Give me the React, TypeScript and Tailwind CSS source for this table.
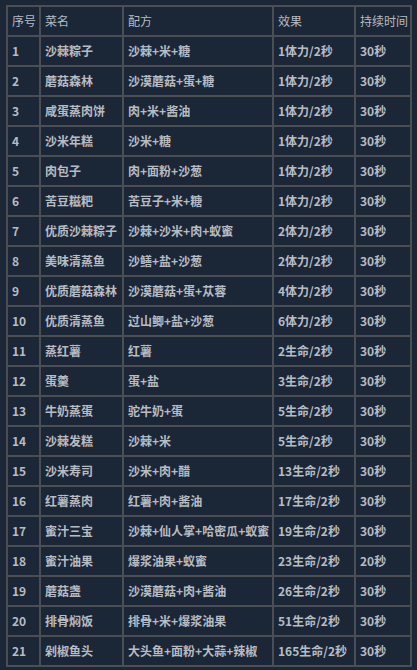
import React from "react";

const rows: [string, string, string, string, string][] = [
  ["1", "沙棘粽子", "沙棘+米+糖", "1体力/2秒", "30秒"],
  ["2", "蘑菇森林", "沙漠蘑菇+蛋+糖", "1体力/2秒", "30秒"],
  ["3", "咸蛋蒸肉饼", "肉+米+酱油", "1体力/2秒", "30秒"],
  ["4", "沙米年糕", "沙米+糖", "1体力/2秒", "30秒"],
  ["5", "肉包子", "肉+面粉+沙葱", "1体力/2秒", "30秒"],
  ["6", "苦豆糍粑", "苦豆子+米+糖", "1体力/2秒", "30秒"],
  ["7", "优质沙棘粽子", "沙棘+沙米+肉+蚁蜜", "2体力/2秒", "30秒"],
  ["8", "美味清蒸鱼", "沙鳝+盐+沙葱", "2体力/2秒", "30秒"],
  ["9", "优质蘑菇森林", "沙漠蘑菇+蛋+苁蓉", "4体力/2秒", "30秒"],
  ["10", "优质清蒸鱼", "过山鲫+盐+沙葱", "6体力/2秒", "30秒"],
  ["11", "蒸红薯", "红薯", "2生命/2秒", "30秒"],
  ["12", "蛋羹", "蛋+盐", "3生命/2秒", "30秒"],
  ["13", "牛奶蒸蛋", "驼牛奶+蛋", "5生命/2秒", "30秒"],
  ["14", "沙棘发糕", "沙棘+米", "5生命/2秒", "30秒"],
  ["15", "沙米寿司", "沙米+肉+醋", "13生命/2秒", "30秒"],
  ["16", "红薯蒸肉", "红薯+肉+酱油", "17生命/2秒", "30秒"],
  ["17", "蜜汁三宝", "沙棘+仙人掌+哈密瓜+蚁蜜", "19生命/2秒", "30秒"],
  ["18", "蜜汁油果", "爆浆油果+蚁蜜", "23生命/2秒", "20秒"],
  ["19", "蘑菇盏", "沙漠蘑菇+肉+酱油", "26生命/2秒", "30秒"],
  ["20", "排骨焖饭", "排骨+米+爆浆油果", "51生命/2秒", "30秒"],
  ["21", "剁椒鱼头", "大头鱼+面粉+大蒜+辣椒", "165生命/2秒", "30秒"],
];

const header = ["序号", "菜名", "配方", "效果", "持续时间"];

export default function App() {
  return (
    <div
      className="w-[417px] h-[670px] overflow-hidden bg-[#1b2637] pt-[5px] pl-[6px]"
      style={{ fontFamily: '"Noto Sans CJK SC", "Noto Sans", sans-serif' }}
    >
      <div className="w-[406px] grid grid-cols-[31px_81px_148px_80px_54px] gap-[2px] p-[2px] bg-[#4b4f54] auto-rows-[28px]">
        {header.map((h, i) => (
          <div
            key={"h" + i}
            className="bg-[#1b2637] flex items-center pl-[4px] text-[12px] text-[#b7bcc2] whitespace-nowrap overflow-hidden"
          >
            {h}
          </div>
        ))}
        {rows.map((r, ri) =>
          r.map((c, ci) => (
            <div
              key={ri + "-" + ci}
              className="bg-[#1b2637] flex items-center pl-[4px] text-[12px] font-bold text-[#b7bcc2] whitespace-nowrap overflow-hidden"
            >
              {c}
            </div>
          ))
        )}
      </div>
      <div className="mt-[1px] text-[13px] leading-[18px] whitespace-nowrap">
        <span className="text-[#c9d0d6]">注：</span>
        <span className="text-[#4f94d4]">以上数据来源于游戏内实测</span>
        <span className="text-[#c9d0d6]">，仅供参考</span>
      </div>
    </div>
  );
}
